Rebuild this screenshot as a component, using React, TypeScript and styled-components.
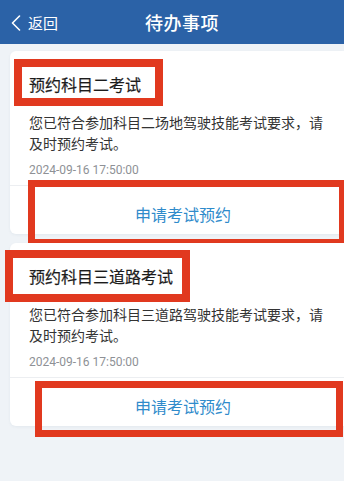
import React from "react";
import styled, { createGlobalStyle } from "styled-components";

const todos = [
  {
    title: "预约科目二考试",
    text: "您已符合参加科目二场地驾驶技能考试要求，请及时预约考试。",
    time: "2024-09-16 17:50:00",
    titleMark: { top: 8, left: 4, width: 149, height: 47, size: 8 },
    buttonMark: { top: 129, left: 18, width: 318, height: 66, size: 7 },
  },
  {
    title: "预约科目三道路考试",
    text: "您已符合参加科目三道路驾驶技能考试要求，请及时预约考试。",
    time: "2024-09-16 17:50:00",
    titleMark: { top: 7, left: -5, width: 185, height: 52, size: 8 },
    buttonMark: { top: 138, left: 25, width: 308, height: 56, size: 7 },
  },
];

const App = () => {
  return (
    <>
      <GlobalStyle />
      <Screen>
        <Header>
          <BackButton>
            <svg width="10" height="16" viewBox="0 0 10 16">
              <polyline
                points="8.5,1 1.5,8 8.5,15"
                fill="none"
                stroke="#fff"
                strokeWidth="1.6"
                strokeLinecap="round"
                strokeLinejoin="round"
              />
            </svg>
            <span>返回</span>
          </BackButton>
          <HeaderTitle>待办事项</HeaderTitle>
        </Header>

        <List>
          {todos.map((item) => (
            <Card key={item.title}>
              <Body>
                <Title>{item.title}</Title>
                <Desc>{item.text}</Desc>
                <Time>{item.time}</Time>
              </Body>
              <ActionButton>申请考试预约</ActionButton>

              {/* red annotation frames laid over the card */}
              <Mark
                $top={item.titleMark.top}
                $left={item.titleMark.left}
                $width={item.titleMark.width}
                $height={item.titleMark.height}
                $size={item.titleMark.size}
              />
              <Mark
                $top={item.buttonMark.top}
                $left={item.buttonMark.left}
                $width={item.buttonMark.width}
                $height={item.buttonMark.height}
                $size={item.buttonMark.size}
              />
            </Card>
          ))}
        </List>
      </Screen>
    </>
  );
};

export default App;

// ======== STYLED COMPONENTS ========

const GlobalStyle = createGlobalStyle`
  html, body {
    margin: 0;
    padding: 0;
    background: #eff3f7;
  }

  body {
    font-family: "Noto Sans CJK SC", "Noto Sans", sans-serif;
  }
`;

const Screen = styled.div`
  min-height: 100vh;
  background: #eff3f7;
  overflow: hidden;
`;

const Header = styled.header`
  position: relative;
  height: 44px;
  padding-left: 20px;
  background: #2b62a7;
  display: flex;
  align-items: center;
  justify-content: center;
`;

const BackButton = styled.div`
  position: absolute;
  left: 11px;
  top: 0;
  bottom: 0;
  display: flex;
  align-items: center;
  gap: 7px;
  color: #fff;
  font-size: 15px;

  svg {
    margin-top: 1px;
  }
`;

const HeaderTitle = styled.h1`
  margin: 0;
  color: #fff;
  font-size: 18px;
  font-weight: 500;
  letter-spacing: 0.5px;
`;

const List = styled.div`
  padding: 7px 0 0 10px;
  display: flex;
  flex-direction: column;
  gap: 9px;
`;

const Card = styled.div`
  position: relative;
  background: #fff;
  border-radius: 6px 0 0 6px;
  box-shadow: 0 1px 3px rgba(30, 60, 100, 0.06);
`;

const Body = styled.div`
  padding: 21px 9px 6px 19px;
  border-bottom: 1px solid #eceef1;
`;

const Title = styled.div`
  font-size: 16px;
  line-height: 24px;
  font-weight: 400;
  color: #1c1c1c;
  -webkit-text-stroke: 0.2px #1c1c1c;
`;

const Desc = styled.p`
  margin: 16px 0 0;
  font-size: 14px;
  line-height: 21px;
  color: #333;
`;

const Time = styled.div`
  margin-top: 7px;
  font-family: Roboto, "Liberation Sans", sans-serif;
  font-size: 12px;
  line-height: 18px;
  letter-spacing: 0;
  color: #8e9196;
`;

const ActionButton = styled.div`
  height: 48px;
  box-sizing: border-box;
  padding: 17px 0 0 12px;
  text-align: center;
  font-size: 16px;
  line-height: 22px;
  color: #2f8bcb;
`;

const Mark = styled.div<{
  $top: number;
  $left: number;
  $width: number;
  $height: number;
  $size: number;
}>`
  position: absolute;
  top: ${(p) => p.$top}px;
  left: ${(p) => p.$left}px;
  width: ${(p) => p.$width}px;
  height: ${(p) => p.$height}px;
  box-sizing: border-box;
  border: ${(p) => p.$size}px solid #e1391f;
  pointer-events: none;
`;
